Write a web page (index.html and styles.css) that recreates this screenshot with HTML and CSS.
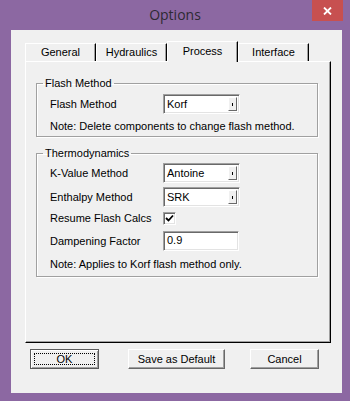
FILE: index.html
```html
<!DOCTYPE html>
<html>
<head>
<meta charset="utf-8">
<link rel="stylesheet" href="styles.css">
</head>
<body>
<div class="window">
  <div class="titlebar">
    <span class="spacer"></span>
    <span class="title">Options</span>
    <span class="close"><svg width="9" height="8" viewBox="0 0 9 8"><path d="M1 0.5 L8 7.5 M8 0.5 L1 7.5" stroke="#fff" stroke-width="1.8" fill="none"/></svg></span>
  </div>
  <div class="client">
    <div class="tabs">
      <div class="tab">General</div>
      <div class="tab">Hydraulics</div>
      <div class="tab active">Process</div>
      <div class="tab">Interface</div>
    </div>
    <div class="panel">
      <fieldset class="group">
        <legend>Flash Method</legend>
        <div class="rows rows-flash">
          <span class="label">Flash Method</span>
          <div class="combo"><span class="combo-text">Korf</span><span class="combo-btn"><i class="arrow"></i></span></div>
          <span class="note">Note: Delete components to change flash method.</span>
        </div>
      </fieldset>
      <fieldset class="group group-thermo">
        <legend>Thermodynamics</legend>
        <div class="rows rows-thermo">
          <span class="label">K-Value Method</span>
          <div class="combo"><span class="combo-text">Antoine</span><span class="combo-btn"><i class="arrow"></i></span></div>
          <span class="label">Enthalpy Method</span>
          <div class="combo"><span class="combo-text">SRK</span><span class="combo-btn"><i class="arrow"></i></span></div>
          <span class="label label-short">Resume Flash Calcs</span>
          <div class="check"><svg width="9" height="9" viewBox="0 0 9 9"><path d="M1 4 L3.5 6.5 L8 1.5" stroke="#000" stroke-width="1.8" fill="none"/></svg></div>
          <span class="label">Dampening Factor</span>
          <div class="textbox">0.9</div>
          <span class="note">Note: Applies to Korf flash method only.</span>
        </div>
      </fieldset>
    </div>
    <div class="buttons">
      <div class="btn btn-default"><span class="focus">OK</span></div>
      <div class="btn btn-save">Save as Default</div>
      <div class="btn btn-cancel">Cancel</div>
    </div>
  </div>
</div>
</body>
</html>
```
FILE: styles.css
```css
html, body {
  margin: 0;
  padding: 0;
}
body {
  width: 350px;
  height: 401px;
  overflow: hidden;
  font-family: "Liberation Sans", Arial, sans-serif;
  font-size: 11px;
  color: #000;
}
.window {
  width: 350px;
  height: 401px;
  background: #8c68a2;
  display: flex;
  flex-direction: column;
}
.titlebar {
  height: 30px;
  flex: none;
  display: grid;
  grid-template-columns: 1fr auto 1fr;
  padding: 0 7px;
}
.title {
  font-family: "Open Sans", "Noto Sans", sans-serif;
  font-size: 14px;
  color: #2e2a33;
  line-height: 30px;
}
.close {
  justify-self: end;
  width: 31px;
  height: 21px;
  background: #c75050;
  display: flex;
  align-items: center;
  justify-content: center;
}
.close svg {
  display: block;
  margin-top: 1px;
}
.client {
  margin-left: 11px;
  width: 331px;
  height: 363px;
  box-sizing: border-box;
  background: #f0f0f0;
  padding: 11px 0 0 14px;
}
.tabs {
  display: flex;
  align-items: flex-end;
  height: 20px;
}
.tab {
  width: 71px;
  height: 18px;
  box-sizing: border-box;
  border-top: 1px solid #fff;
  border-left: 1px solid #fff;
  border-right: 1px solid #000;
  box-shadow: inset -1px 0 0 #a0a0a0;
  text-align: center;
  line-height: 17px;
  background: #f0f0f0;
}
.tab.active {
  height: 21px;
  margin-bottom: -1px;
  position: relative;
  z-index: 1;
  line-height: 18px;
}
.panel {
  width: 306px;
  height: 282px;
  box-sizing: border-box;
  border-top: 1px solid #fff;
  border-left: 1px solid #fff;
  border-right: 1px solid #000;
  border-bottom: 1px solid #000;
  box-shadow: inset -1px -1px 0 #a0a0a0;
  background: #f0f0f0;
  padding: 15px 12px 0 10px;
}
.group {
  margin: 0;
  padding: 0 0 3px 0;
  border: 1px solid #a0a0a0;
  box-shadow: 1px 1px 0 #fff, inset 1px 1px 0 #fff;
  min-width: 0;
}
.group legend {
  padding: 0 2px;
  margin-left: 6px;
  line-height: 13px;
}
.group-thermo {
  margin-top: 10px;
  padding-bottom: 5px;
}
.rows {
  display: grid;
  grid-template-columns: 113px 77px;
  padding-left: 13px;
  align-items: end;
}
.rows-flash {
  padding-top: 4px;
  grid-template-rows: 20px 19px;
}
.rows-thermo {
  padding-top: 3px;
  grid-template-rows: 20px 24px 18px 26px 20px;
}
.label {
  line-height: 20px;
}
.label-short {
  line-height: 13px;
}
.note {
  grid-column: 1 / span 2;
  line-height: 13px;
  white-space: nowrap;
}
.combo {
  height: 20px;
  box-sizing: border-box;
  border-top: 1px solid #a0a0a0;
  border-left: 1px solid #a0a0a0;
  border-right: 1px solid #fff;
  border-bottom: 1px solid #fff;
  box-shadow: inset 1px 1px 0 #696969, inset -1px -1px 0 #e3e3e3;
  background: #fff;
  display: flex;
  padding: 2px;
}
.combo-text {
  flex: 1;
  line-height: 14px;
  padding-left: 1px;
}
.combo-btn {
  width: 9px;
  box-sizing: border-box;
  background: #f0f0f0;
  border-top: 1px solid #fff;
  border-left: 1px solid #fff;
  border-right: 1px solid #696969;
  border-bottom: 1px solid #696969;
  display: flex;
  align-items: center;
  justify-content: center;
}
.arrow {
  display: block;
  width: 1px;
  height: 3px;
  background: #000;
}
.check {
  width: 13px;
  height: 13px;
  box-sizing: border-box;
  border-top: 1px solid #a0a0a0;
  border-left: 1px solid #a0a0a0;
  border-right: 1px solid #fff;
  border-bottom: 1px solid #fff;
  box-shadow: inset 1px 1px 0 #696969, inset -1px -1px 0 #e3e3e3;
  background: #fff;
  display: flex;
  align-items: center;
  justify-content: center;
}
.check svg {
  display: block;
}
.textbox {
  height: 20px;
  width: 76px;
  box-sizing: border-box;
  border-top: 1px solid #a0a0a0;
  border-left: 1px solid #a0a0a0;
  border-right: 1px solid #fff;
  border-bottom: 1px solid #fff;
  box-shadow: inset 1px 1px 0 #696969, inset -1px -1px 0 #e3e3e3;
  background: #fff;
  line-height: 17px;
  padding-left: 3px;
}
.buttons {
  display: flex;
  margin-top: 6px;
}
.btn {
  height: 20px;
  box-sizing: border-box;
  border-top: 1px solid #fff;
  border-left: 1px solid #fff;
  border-right: 1px solid #696969;
  border-bottom: 1px solid #696969;
  box-shadow: inset -1px -1px 0 #a0a0a0;
  background: #f0f0f0;
  text-align: center;
  line-height: 18px;
}
.btn-default {
  margin-left: 5px;
  width: 69px;
  border: 1px solid #5a5a5a;
  box-shadow: inset 1px 1px 0 #fff, inset -1px -1px 0 #a0a0a0;
  padding: 3px;
}
.focus {
  display: block;
  height: 12px;
  box-sizing: border-box;
  border: 1px dotted #000;
  line-height: 10px;
}
.btn-save {
  margin-left: 29px;
  width: 97px;
}
.btn-cancel {
  margin-left: 25px;
  width: 69px;
}
```
